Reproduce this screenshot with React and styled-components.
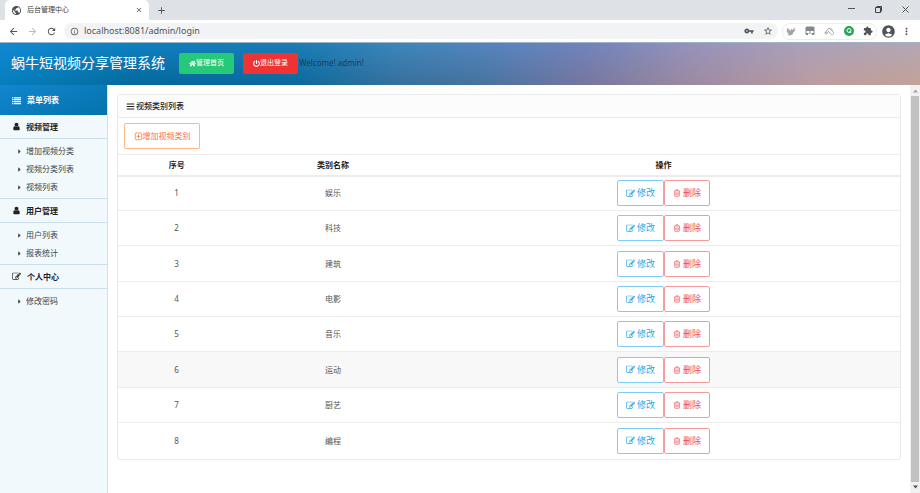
import React from "react";
import styled, { createGlobalStyle } from "styled-components";
import {
  MdPublic, MdClose, MdAdd, MdArrowBack, MdArrowForward, MdRefresh, MdInfoOutline,
  MdVpnKey, MdStarBorder, MdExtension, MdAccountCircle, MdMoreVert,
} from "react-icons/md";
import { FaHome, FaPowerOff, FaCaretRight } from "react-icons/fa";

const Global = createGlobalStyle`
  *, *::before, *::after { box-sizing: border-box; }
  body {
    margin: 0;
    background: #fff;
    color: #333;
    font: 8px/12px "Noto Sans", "Noto Sans CJK SC", sans-serif;
  }
  button, input { font: inherit; color: inherit; margin: 0; padding: 0; border: 0; background: none; }
  button { cursor: pointer; white-space: nowrap; }
  svg { display: block; flex: none; }
`;

/* ---------- icons ---------- */

const Glyph = ({ size = 9, children }) => (
  <svg width={size} height={size} viewBox="0 0 1792 1792" fill="currentColor" aria-hidden="true">
    {children}
  </svg>
);

const UserIcon = (p) => (
  <Glyph {...p}>
    <path d="M1536 1399q0 109-62.5 187t-150.5 78h-854q-88 0-150.5-78t-62.5-187q0-85 8.5-160.5t31.5-152 58.5-131 94-89 134.5-34.5q131 128 313 128t313-128q76 0 134.5 34.5t94 89 58.5 131 31.5 152 8.5 160.5zm-256-887q0 159-112.5 271.5t-271.5 112.5-271.5-112.5-112.5-271.5 112.5-271.5 271.5-112.5 271.5 112.5 112.5 271.5z" />
  </Glyph>
);

const EditIcon = (p) => (
  <Glyph {...p}>
    <path d="M888 1184l116-116-152-152-116 116v56h96v96h56zm440-720q-16-16-33 1l-350 350q-17 17-1 33t33-1l350-350q17-17 1-33zm80 594v190q0 119-84.5 203.5t-203.5 84.5h-832q-119 0-203.5-84.5t-84.5-203.5v-832q0-119 84.5-203.5t203.5-84.5h832q63 0 117 25 15 7 18 23 3 17-9 29l-49 49q-14 14-32 8-23-6-45-6h-832q-66 0-113 47t-47 113v832q0 66 47 113t113 47h832q66 0 113-47t47-113v-126q0-13 9-22l64-64q15-15 35-7t20 29zm-96-738l288 288-672 672h-288v-288zm444 132l-92 92-288-288 92-92q28-28 68-28t68 28l152 152q28 28 28 68t-28 68z" />
  </Glyph>
);

const TrashIcon = (p) => (
  <Glyph {...p}>
    <path d="M704 736v576q0 14-9 23t-23 9h-64q-14 0-23-9t-9-23v-576q0-14 9-23t23-9h64q14 0 23 9t9 23zm256 0v576q0 14-9 23t-23 9h-64q-14 0-23-9t-9-23v-576q0-14 9-23t23-9h64q14 0 23 9t9 23zm256 0v576q0 14-9 23t-23 9h-64q-14 0-23-9t-9-23v-576q0-14 9-23t23-9h64q14 0 23 9t9 23zm128 724v-948h-896v948q0 22 7 40.5t14.5 27 10.5 8.5h832q3 0 10.5-8.5t14.5-27 7-40.5zm-672-1076h448l-48-117q-7-9-17-11h-317q-10 2-17 11zm928 32v64q0 14-9 23t-23 9h-96v948q0 83-47 143.5t-113 60.5h-832q-66 0-113-58.5t-47-141.5v-952h-96q-14 0-23-9t-9-23v-64q0-14 9-23t23-9h309l70-167q15-37 54-63t79-26h320q40 0 79 26t54 63l70 167h309q14 0 23 9t9 23z" />
  </Glyph>
);

const ListIcon = (p) => (
  <Glyph {...p}>
    {[224, 608, 992, 1376].map((y) => (
      <g key={y}>
        <rect x="0" y={y} width="256" height="260" rx="32" />
        <rect x="384" y={y} width="1408" height="260" rx="32" />
      </g>
    ))}
  </Glyph>
);

const BarsIcon = (p) => (
  <Glyph {...p}>
    {[320, 800, 1280].map((y) => (
      <rect key={y} x="128" y={y} width="1536" height="200" rx="60" />
    ))}
  </Glyph>
);

const PlusSquareIcon = (p) => (
  <Glyph {...p}>
    <path
      d="M448 192h896a192 192 0 0 1 192 192v960a192 192 0 0 1-192 192H448a192 192 0 0 1-192-192V384a192 192 0 0 1 192-192zM896 480v768M512 864h768"
      fill="none"
      stroke="currentColor"
      strokeWidth="150"
    />
  </Glyph>
);

const BirdIcon = () => (
  <svg width="10" height="10" viewBox="0 0 20 20" fill="#a4a4a4" aria-hidden="true">
    <path d="M1 4l5 2 3 4 2-5 2 3 6-6-2 6 2 1-4 3-2 5-5 2-5-1 3-2-4-2 2-1-4-3 3-1z" />
  </svg>
);

const PanelIcon = () => (
  <svg width="10" height="10" viewBox="0 0 20 20" aria-hidden="true">
    <path d="M4 1h12a3 3 0 0 1 3 3v12a2 2 0 0 1-2 2h-3v-3H6v3H3a2 2 0 0 1-2-2V4a3 3 0 0 1 3-3z" fill="#85878a" />
    <rect x="3" y="10" width="6" height="4" fill="#fff" />
    <rect x="11" y="10" width="6" height="4" fill="#fff" />
  </svg>
);

const PeaksIcon = () => (
  <svg width="11" height="10" viewBox="0 0 22 20" fill="none" stroke="#a9abad" strokeWidth="2" aria-hidden="true">
    <path d="M2 14L10 4l9 9a3 3 0 0 1-4 4l-5-5M6 15l4-5M13 4l5 5" />
    <circle cx="4" cy="14" r="2" />
  </svg>
);

const SearchBadgeIcon = () => (
  <svg width="10" height="10" viewBox="0 0 20 20" fill="none" aria-hidden="true">
    <circle cx="10" cy="10" r="10" fill="#23a557" />
    <circle cx="10" cy="9" r="4" stroke="#fff" strokeWidth="2" />
    <path d="M11 10l3 4" stroke="#fff" strokeWidth="2" />
  </svg>
);

const MinimizeIcon = () => (
  <svg width="7" height="7" viewBox="0 0 7 7" aria-hidden="true"><path d="M0 2.5h7" stroke="#555" /></svg>
);

const RestoreIcon = () => (
  <svg width="7" height="7" viewBox="0 0 7 7" fill="none" stroke="#444" aria-hidden="true">
    <path d="M.5 1.5h5v5h-5zM1.500 .5h5v5" />
  </svg>
);

const CloseIcon = () => (
  <svg width="7" height="7" viewBox="0 0 7 7" fill="none" stroke="#555" aria-hidden="true">
    <path d="M.5 .5l6 6M6.500 .5l-6 6" />
  </svg>
);

/* ---------- browser frame ---------- */

const Window = styled.div`
  display: flex;
  flex-direction: column;
  min-height: 100vh;
`;

const TabStrip = styled.div`
  display: flex;
  align-items: center;
  height: 20px;
  padding-left: 5px;
  padding-right: 11px;
  background: #dee1e6;
  color: #3c4043;
`;

const Tab = styled.div`
  display: flex;
  align-items: center;
  gap: 5px;
  width: 144px;
  height: 20px;
  padding: 0 6px;
  border-radius: 5px 5px 0 0;
  background: #fff;
  font-size: 7px;
`;

const TabTitle = styled.span`
  flex: 1;
`;

const IconButton = styled.button`
  display: flex;
  align-items: center;
  justify-content: center;
  color: ${(p) => (p.$faint ? "#b9bbbe" : "#505357")};
`;

const NewTab = styled(IconButton)`
  margin-left: 7px;
`;

const WindowControls = styled.div`
  display: flex;
  gap: 20px;
  padding-bottom: 2px;
  margin-left: auto;
`;

const Toolbar = styled.div`
  display: flex;
  align-items: center;
  gap: 4px;
  height: 22px;
  padding: 0 8px;
`;

const NavButtons = styled.div`
  display: flex;
  gap: 8px;
`;

const ProfileButtons = styled.div`
  display: flex;
  align-items: center;
  gap: 5px;
`;

const AddressBar = styled.label`
  display: flex;
  flex: 1;
  align-items: center;
  gap: 5px;
  height: 16px;
  padding: 0 5px 0 6px;
  margin-left: 3px;
  border-radius: 8px;
  background: #f1f3f4;
  color: #505357;
`;

const AddressInput = styled.input`
  flex: 1;
  min-width: 0;
  font-size: 9px;
  outline: none;
`;

const AddressActions = styled.div`
  display: flex;
  gap: 9px;
`;

const Extensions = styled.div`
  display: flex;
  align-items: center;
  gap: 9px;
  height: 17px;
  padding: 0 3px;
  border: 1px solid #eceded;
  border-radius: 8px;
`;

/* ---------- site header ---------- */

const Header = styled.header`
  position: relative;
  display: flex;
  align-items: center;
  gap: 9px;
  height: 43px;
  padding: 0 12px 2px 11px;
  border-top: 1px solid #9db3c8;
  background: linear-gradient(90deg, #0680be 0%, #05699c 15%, #0b6a9c 32%, #36709c 43%, #46739f 52%, #74769f 63%, #9a89a0 74%, #bd9da0 89%, #c3a297 100%);

  &::before {
    content: "";
    position: absolute;
    inset: 0;
    background: linear-gradient(90deg, #1188d2 0%, #0f80bf 15%, #1b7cb4 32%, #3c86ba 43%, #5884bd 54%, #7284ba 64%, #9893bc 76%, #a9a0b8 87%, #b3a7b4 100%);
    mask-image: linear-gradient(180deg, #000, transparent);
  }

  & > * { position: relative; }
`;

const SiteTitle = styled.h1`
  margin: 0 5px 0 0;
  color: #fff;
  font-size: 14px;
  font-weight: 400;
  line-height: 20px;
  white-space: nowrap;
`;

const HeaderButton = styled.button`
  display: flex;
  align-items: center;
  justify-content: center;
  width: 55px;
  height: 21px;
  border-radius: 2px;
  background: ${(p) => (p.$danger ? "#ef3234" : "#25ca78")};
  color: #fff;
  font-size: 7px;
`;

const Account = styled.div`
  display: flex;
  align-items: center;
  gap: 1px;
  color: #1f3d52;
`;

/* ---------- sidebar ---------- */

const Body = styled.div`
  display: flex;
  flex: 1;
`;

const Sidebar = styled.nav`
  width: 108px;
  border-right: 1px solid #cfe3ee;
  background: #f1f9fd;
`;

const Heading = styled.h2`
  display: flex;
  align-items: center;
  gap: ${(p) => (p.$wide ? "6px" : "5px")};
  height: 24px;
  margin: 0;
  padding-left: 12px;
  border-bottom: 1px solid #c9dfe9;
  color: #222;
  font-size: 8px;
  font-weight: 700;
`;

const MenuTitle = styled(Heading)`
  height: 30px;
  border-bottom: 0;
  background: linear-gradient(160deg, #1186cf, #0672ab);
  color: #fff;
`;

const MenuList = styled.ul`
  margin: 0;
  padding: 3px 0 2px 16px;
  list-style: none;

  &:not(:last-child) { border-bottom: 1px solid #c9dfe9; }
`;

const MenuLink = styled.a`
  display: flex;
  align-items: center;
  gap: 3px;
  height: 18px;
  color: #444;
  text-decoration: none;
`;

/* ---------- content ---------- */

const Main = styled.main`
  flex: 1;
  min-width: 0;
  padding: 9px;
`;

const Card = styled.section`
  border: 1px solid #e9e9e9;
  border-radius: 3px;
`;

const CardTitle = styled.h2`
  display: flex;
  align-items: center;
  gap: 1px;
  height: 23px;
  margin: 0;
  padding-left: 8px;
  border-bottom: 1px solid #ececec;
  background: #fcfcfc;
  color: #222;
  font-size: 8px;
  font-weight: 500;
`;

const CardActions = styled.div`
  padding: 5px 6px;
`;

const OutlineButton = styled.button`
  display: inline-flex;
  align-items: center;
  justify-content: center;
  gap: ${(p) => (p.$tight ? "0" : "2px")};
  height: 26px;
  padding: 0 8px;
  border: 1px solid ${(p) => p.$line};
  border-radius: 2px;
  background: #fff;
  color: ${(p) => p.$ink};
  font-size: ${(p) => (p.$tight ? "8px" : "9px")};
  vertical-align: top;
`;

const AddButton = styled(OutlineButton)`
  width: 76px;
`;

const Table = styled.table`
  width: 100%;
  border-collapse: collapse;
  table-layout: fixed;
  text-align: center;

  th:last-child, td:last-child { padding-right: 4px; }
`;

const Th = styled.th`
  width: ${(p) => p.$width};
  height: 21px;
  padding: 0;
  border-top: 1px solid #ececec;
  border-bottom: 2px solid #ececec;
  color: #222;
  font-weight: 700;
`;

const Row = styled.tr`
  height: 35px;
  background: ${(p) => (p.$active ? "#f8f8f8" : "transparent")};

  &:nth-child(3n), &:last-child { height: 36px; }
  & + & { border-top: 1px solid #ececec; }
`;

const Td = styled.td`
  padding: 0;
  color: #555;
`;

/* ---------- scrollbar ---------- */

const ScrollTrack = styled.div`
  display: flex;
  flex-direction: column;
  align-items: center;
  justify-content: space-between;
  gap: 3px;
  width: 10px;
  padding: 4px 1px;
  background: #f1f1f1;
`;

const ScrollThumb = styled.div`
  flex: 1;
  width: 8px;
  background: #c1c1c1;
`;

const Arrow = ({ down }) => (
  <svg width="5" height="4" viewBox="0 0 5 4" fill={down ? "#505050" : "#a3a3a3"} aria-hidden="true">
    <path d={down ? "M0 .5h5L2.500 3.500z" : "M0 3.500h5L2.500 .5z"} />
  </svg>
);

/* ---------- data ---------- */

const menu = [
  { title: "视频管理", icon: UserIcon, items: ["增加视频分类", "视频分类列表", "视频列表"] },
  { title: "用户管理", icon: UserIcon, items: ["用户列表", "报表统计"] },
  { title: "个人中心", icon: EditIcon, wide: true, items: ["修改密码"] },
];

const categories = ["娱乐", "科技", "建筑", "电影", "音乐", "运动", "厨艺", "编程"];

export default function App() {
  return (
    <Window>
      <Global />
      <TabStrip>
        <Tab>
          <MdPublic size={11} color="#4d5156" />
          <TabTitle>后台管理中心</TabTitle>
          <IconButton aria-label="关闭标签页"><MdClose size={8} /></IconButton>
        </Tab>
        <NewTab aria-label="新标签页"><MdAdd size={11} /></NewTab>
        <WindowControls>
          <IconButton aria-label="最小化"><MinimizeIcon /></IconButton>
          <IconButton aria-label="还原"><RestoreIcon /></IconButton>
          <IconButton aria-label="关闭"><CloseIcon /></IconButton>
        </WindowControls>
      </TabStrip>
      <Toolbar>
        <NavButtons>
          <IconButton aria-label="后退"><MdArrowBack size={11} /></IconButton>
          <IconButton aria-label="前进" $faint><MdArrowForward size={11} /></IconButton>
          <IconButton aria-label="刷新"><MdRefresh size={11} /></IconButton>
        </NavButtons>
        <AddressBar>
          <MdInfoOutline size={9} />
          <AddressInput aria-label="地址" defaultValue="localhost:8081/admin/login" />
          <AddressActions>
            <IconButton aria-label="密码"><MdVpnKey size={10} /></IconButton>
            <IconButton aria-label="收藏"><MdStarBorder size={10} /></IconButton>
          </AddressActions>
        </AddressBar>
        <Extensions>
          <BirdIcon />
          <PanelIcon />
          <PeaksIcon />
          <SearchBadgeIcon />
          <MdExtension size={10} color="#505357" />
        </Extensions>
        <ProfileButtons>
          <IconButton aria-label="账户"><MdAccountCircle size={15} /></IconButton>
          <IconButton aria-label="更多"><MdMoreVert size={11} /></IconButton>
        </ProfileButtons>
      </Toolbar>

      <Header>
        <SiteTitle>蜗牛短视频分享管理系统</SiteTitle>
        <HeaderButton><FaHome size={7} />管理首页</HeaderButton>
        <Account>
          <HeaderButton $danger><FaPowerOff size={7} />退出登录</HeaderButton>
          <span>Welcome! admin!</span>
        </Account>
      </Header>

      <Body>
        <Sidebar>
          <MenuTitle $wide><ListIcon />菜单列表</MenuTitle>
          {menu.map(({ title, icon: Icon, wide, items }) => (
            <React.Fragment key={title}>
              <Heading $wide={wide}><Icon />{title}</Heading>
              <MenuList>
                {items.map((item) => (
                  <li key={item}>
                    <MenuLink href="#"><FaCaretRight size={7} />{item}</MenuLink>
                  </li>
                ))}
              </MenuList>
            </React.Fragment>
          ))}
        </Sidebar>

        <Main>
          <Card>
            <CardTitle><BarsIcon />视频类别列表</CardTitle>
            <CardActions>
              <AddButton $tight $line="#ffb587" $ink="#ff7433"><PlusSquareIcon />增加视频类别</AddButton>
            </CardActions>
            <Table>
              <thead>
                <tr>
                  <Th $width="15%">序号</Th>
                  <Th $width="25%">类别名称</Th>
                  <Th $width="60%">操作</Th>
                </tr>
              </thead>
              <tbody>
                {categories.map((name, i) => (
                  <Row key={name} $active={i === 5}>
                    <Td>{i + 1}</Td>
                    <Td>{name}</Td>
                    <Td>
                      <OutlineButton $line="#7fcdf7" $ink="#2ba5e8"><EditIcon />修改</OutlineButton>
                      <OutlineButton $line="#f59a9c" $ink="#ef4a50"><TrashIcon size={8} />删除</OutlineButton>
                    </Td>
                  </Row>
                ))}
              </tbody>
            </Table>
          </Card>
        </Main>

        <ScrollTrack>
          <Arrow />
          <ScrollThumb />
          <Arrow down />
        </ScrollTrack>
      </Body>
    </Window>
  );
}
